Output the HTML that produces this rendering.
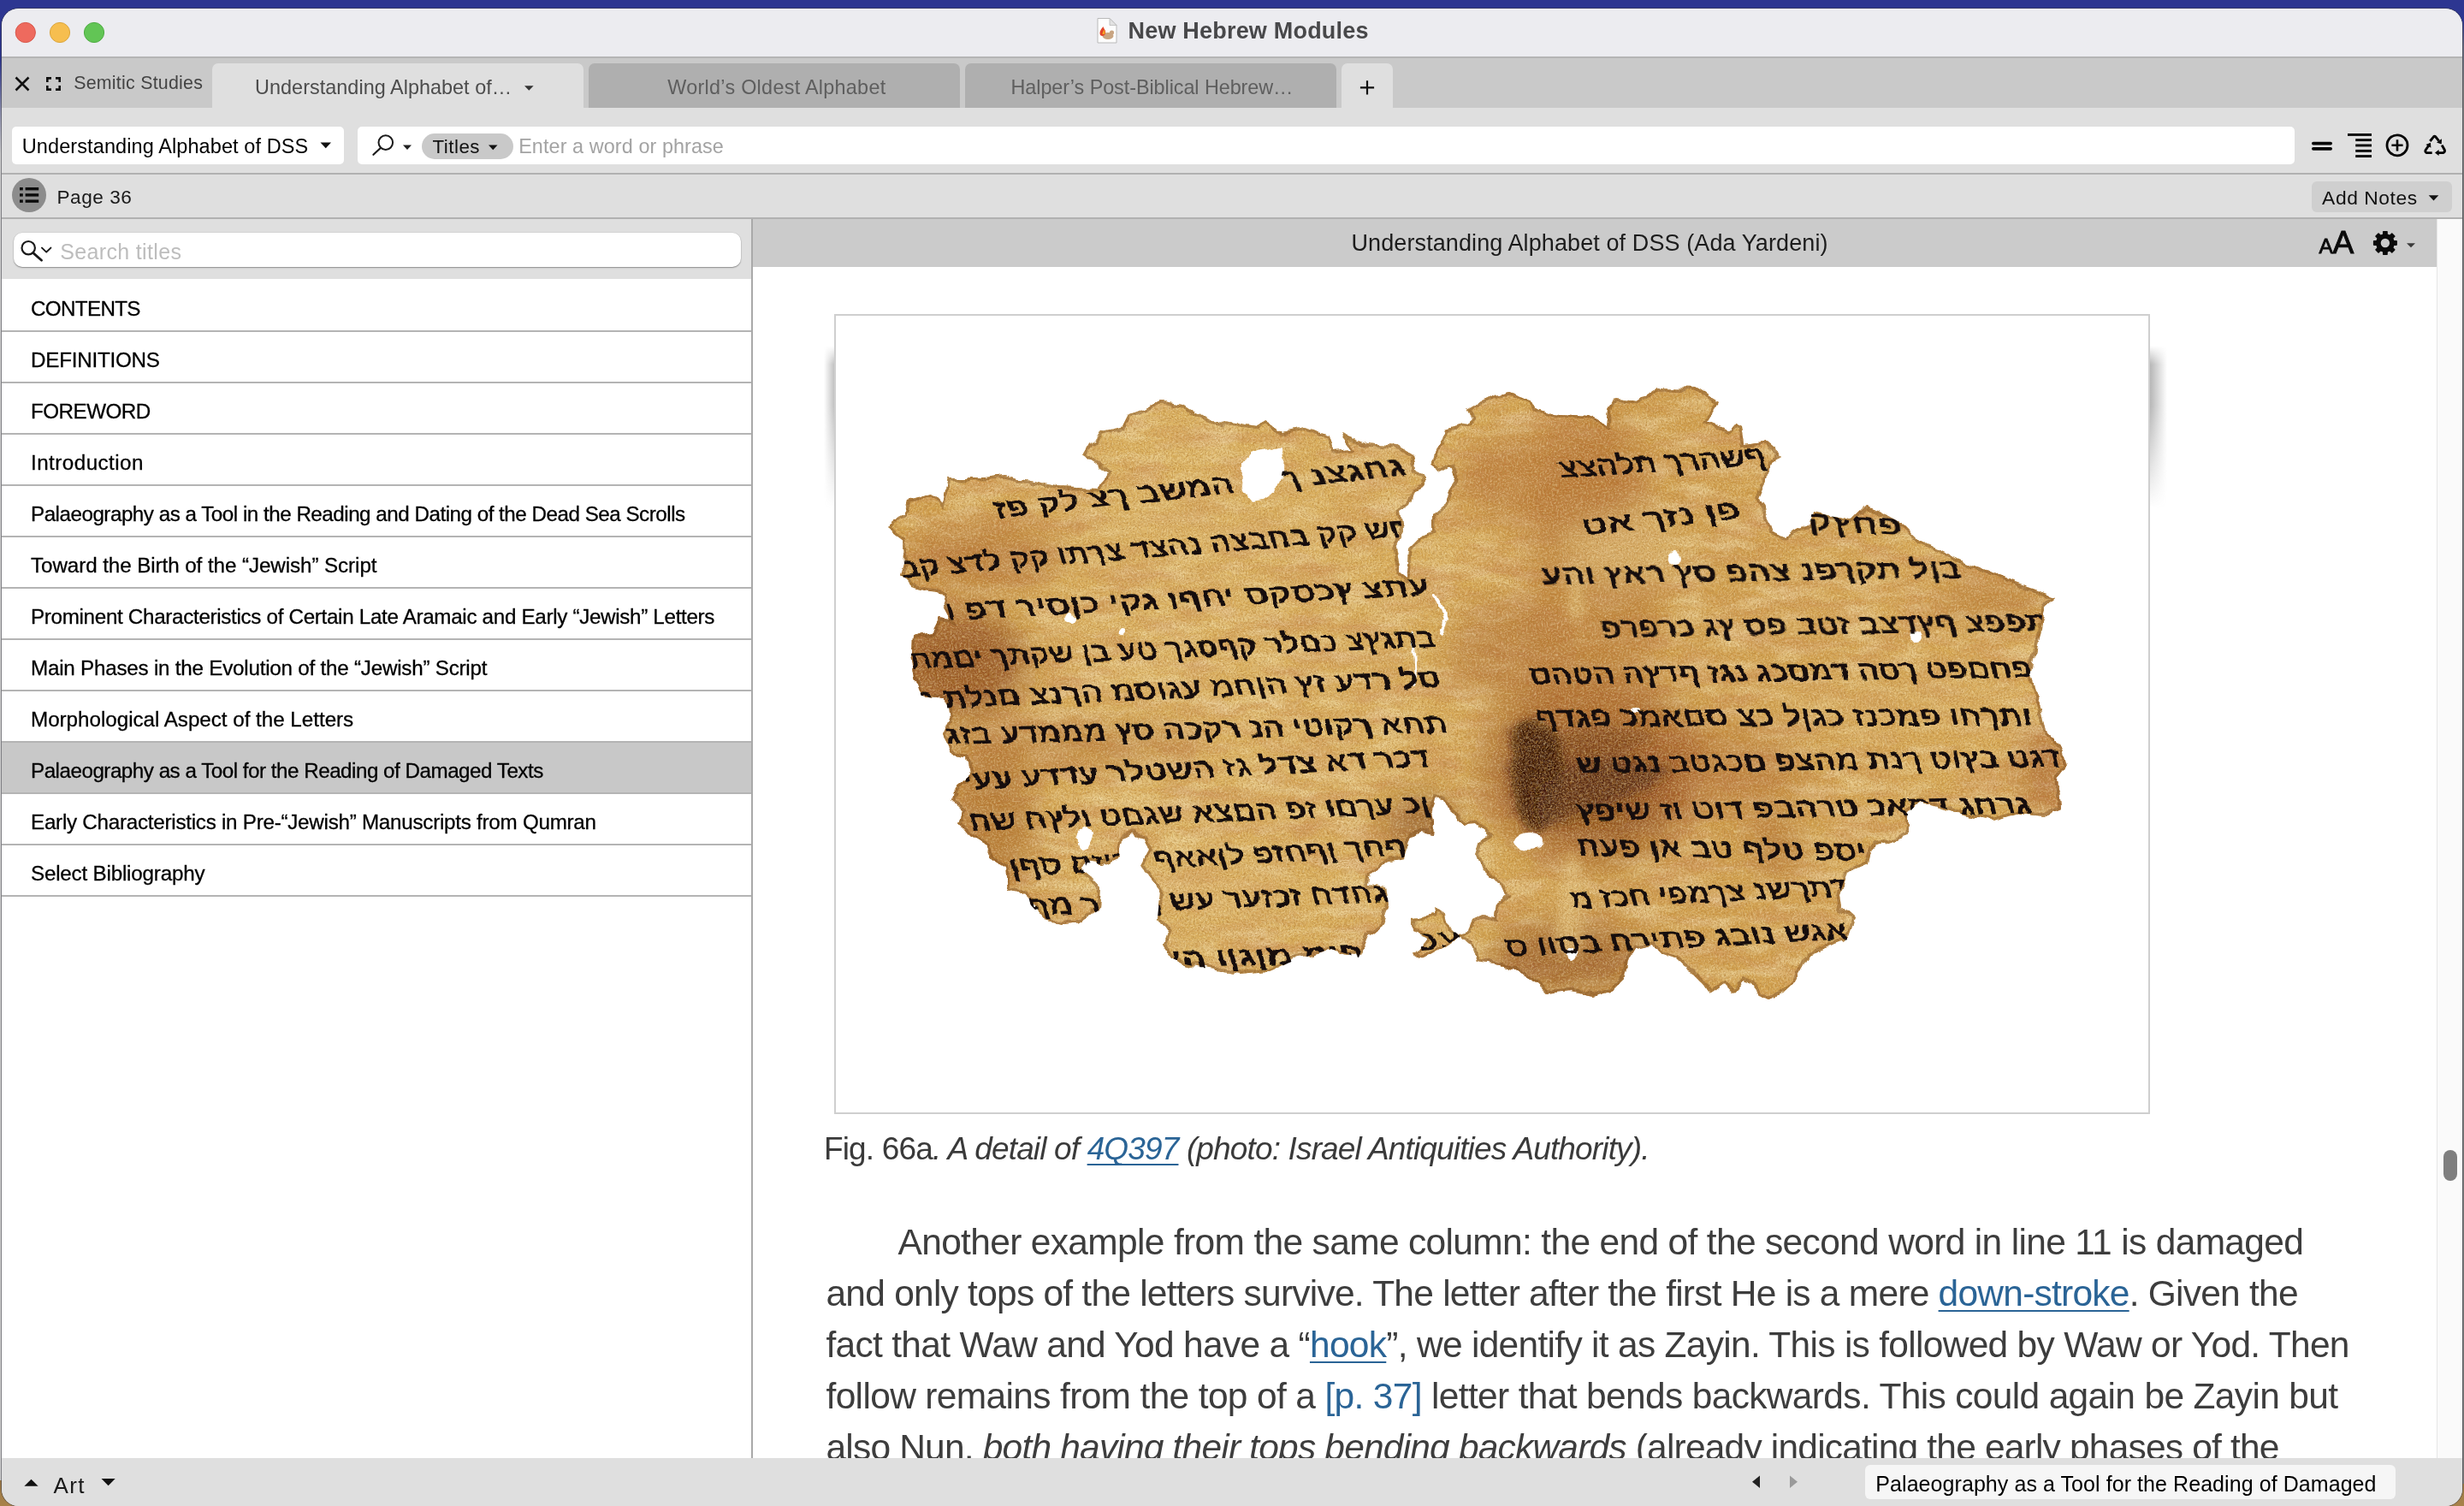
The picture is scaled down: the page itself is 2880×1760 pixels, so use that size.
<!DOCTYPE html>
<html lang="en"><head><meta charset="utf-8"><title>New Hebrew Modules</title>
<style>
html,body{margin:0;padding:0}
body{width:2880px;height:1760px;position:relative;overflow:hidden;font-family:"Liberation Sans",sans-serif;
 background:linear-gradient(180deg,#2d3691 0,#2d3691 700px,#3a3f6e 1100px,#6b5a3a 1600px,#a8824a 1760px)}
.a{position:absolute}
.t{position:absolute;white-space:pre;line-height:1}
.lk{color:#2a6496;text-decoration:underline;text-decoration-skip-ink:none;text-decoration-thickness:2px;text-underline-offset:5px}
.pg{color:#2a6496}
i{font-style:italic}
#win{left:2px;top:10px;width:2876px;height:1750px;border-radius:20px 20px 20px 20px;background:#dfdfdf;overflow:hidden;box-shadow:0 0 0 1px rgba(60,60,70,.55)}
.sep{position:absolute;height:2px;background:#b1b1b1}
.tab{position:absolute;top:64px;height:52px;border-radius:7px 7px 0 0}
.row{position:absolute;left:0;width:876px;height:58px;background:#fff;border-bottom:2px solid #b4b4b4}
</style></head><body>
<!-- desktop edge strips -->
<div class="a" style="left:0;top:70px;width:3px;height:1660px;background:linear-gradient(180deg,#2d3691 0,#8f92b0 60px,#cfcfcf 110px,#cfcfcf 100%)"></div>
<div class="a" style="left:2877px;top:24px;width:3px;height:1710px;background:linear-gradient(180deg,#2d3691 0,#666a80 30px,#7e7e7e 80px,#7e7e7e 100%)"></div>
<!-- window (coords inside #win are offset by -2,-10) -->
<div id="win" class="a">
 <!-- title bar -->
 <div class="a" style="left:0;top:0;width:2876px;height:56px;background:#ececf0"></div>
 <div class="a" style="left:0;top:56px;width:2876px;height:2px;background:#b5b5b5"></div>
 <!-- tab bar -->
 <div class="a" style="left:0;top:58px;width:2876px;height:58px;background:#c9c9c9"></div>
 <div class="tab" style="left:246px;width:434px;background:#dfdfdf"></div>
 <div class="tab" style="left:686px;width:434px;background:#afafaf"></div>
 <div class="tab" style="left:1126px;width:434px;background:#afafaf"></div>
 <div class="tab" style="left:1566px;width:60px;background:#dfdfdf"></div>
 <!-- toolbar -->
 <div class="a" style="left:12px;top:138px;width:388px;height:44px;background:#fff;border-radius:5px"></div>
 <div class="a" style="left:416px;top:138px;width:2264px;height:44px;background:#fff;border-radius:5px"></div>
 <div class="a" style="left:491px;top:146px;width:107px;height:30px;background:#c9c9c9;border-radius:15px"></div>
 <div class="sep" style="left:0;top:192px;width:2876px"></div>
 <!-- page row -->
 <div class="a" style="left:12px;top:198px;width:40px;height:40px;border-radius:20px;background:#8c8c8c"></div>
 <div class="a" style="left:2700px;top:202px;width:164px;height:36px;border-radius:6px;background:#cfcfcf"></div>
 <div class="sep" style="left:0;top:244px;width:2876px"></div>
 <!-- sidebar -->
 <div class="a" style="left:0;top:246px;width:876px;height:70px;background:#dfdfdf"></div>
 <div class="a" style="left:14px;top:262px;width:850px;height:40px;background:#fff;border-radius:10px;box-shadow:0 1px 1.5px rgba(0,0,0,.35),0 0 0 .5px rgba(0,0,0,.08)"></div>
 <div class="a" style="left:0;top:316px;width:876px;height:1378px;background:#fff"></div>
 <div class="row" style="top:318px"></div>
 <div class="row" style="top:378px"></div>
 <div class="row" style="top:438px"></div>
 <div class="row" style="top:498px"></div>
 <div class="row" style="top:558px"></div>
 <div class="row" style="top:618px"></div>
 <div class="row" style="top:678px"></div>
 <div class="row" style="top:738px"></div>
 <div class="row" style="top:798px"></div>
 <div class="row" style="top:858px;background:#c8c8c8"></div>
 <div class="row" style="top:918px"></div>
 <div class="row" style="top:978px"></div>
 <div class="a" style="left:876px;top:246px;width:2px;height:1448px;background:#a9a9a9"></div>
 <!-- content -->
 <div class="a" style="left:878px;top:246px;width:1968px;height:56px;background:#cbcbcb"></div>
 <div class="a" style="left:878px;top:302px;width:1968px;height:1392px;background:#fff"></div>
 <!-- scrollbar -->
 <div class="a" style="left:2846px;top:246px;width:30px;height:1448px;background:#fafafa;border-left:1px solid #e6e6e6;box-sizing:border-box"></div>
 <div class="a" style="left:2854px;top:1334px;width:16px;height:36px;border-radius:8px;background:#7f7f7f"></div>
</div>

<!-- icons -->
<svg class="a" style="left:0;top:0;z-index:6" width="2880" height="340" viewBox="0 0 2880 340">
 <!-- traffic lights -->
 <circle cx="29.8" cy="38" r="11.6" fill="#ee6a5e" stroke="#d8574b" stroke-width="1"/>
 <circle cx="70" cy="38" r="11.6" fill="#f6be4f" stroke="#dba53b" stroke-width="1"/>
 <circle cx="110" cy="38" r="11.6" fill="#62c555" stroke="#4eac42" stroke-width="1"/>
 <!-- doc icon -->
 <g>
  <path d="M1283 21.5h14l8 8v20.5h-22z" fill="#fdfdfd" stroke="#b9b9b9" stroke-width="1"/>
  <path d="M1297 21.5v8h8z" fill="#e2e2e2" stroke="#b9b9b9" stroke-width=".8"/>
  <ellipse cx="1295" cy="42" rx="6.5" ry="4" fill="#c9a582"/>
  <circle cx="1299.5" cy="38" r="2.6" fill="#c9a582"/>
  <path d="M1286 41c-1.500-4 1-7 3.500-10 .5 3 3.500 4 2.500 8-.8 3-4 4-6 2z" fill="#e2452a"/>
  <path d="M1288.500 40c0-2.500 1.500-3.500 2-5.500 1 2 1.500 3.500.5 5.500z" fill="#f5a623"/>
 </g>
 <!-- close X -->
 <path d="M18.500 90.500l15 15M33.500 90.500l-15 15" stroke="#111" stroke-width="2.600" fill="none"/>
 <!-- fullscreen brackets -->
 <path d="M55.300 96v-4.600h4.700M65 91.400h4.700v4.600M69.700 100v4.600h-4.700M60 104.600h-4.700v-4.600" stroke="#111" stroke-width="2.600" fill="none"/>
 <!-- tab triangle -->
 <path d="M613 100.200h10.600l-5.300 5.600z" fill="#333"/>
 <!-- + -->
 <path d="M1598 94.200v16.200M1589.900 102.300h16.200" stroke="#111" stroke-width="2.200" fill="none"/>
 <!-- dropdown triangle -->
 <path d="M374.500 166.500h12.500l-6.250 6.800z" fill="#111"/>
 <!-- magnifier -->
 <circle cx="450.800" cy="166.600" r="8.300" fill="none" stroke="#1a1a1a" stroke-width="2"/>
 <path d="M445 172.800l-8.600 8" stroke="#1a1a1a" stroke-width="2.200" stroke-linecap="round"/>
 <path d="M471 169.500h10l-5 5.500z" fill="#222"/>
 <!-- Titles triangle -->
 <path d="M571 169.500h10.500l-5.250 5.800z" fill="#111"/>
 <!-- list icon in circle -->
 <g fill="#0a0a0a">
  <rect x="23" y="219" width="3.800" height="3.400"/><rect x="29.600" y="219" width="15.600" height="3.400"/>
  <rect x="23" y="226.200" width="3.800" height="3.400"/><rect x="29.600" y="226.200" width="15.600" height="3.400"/>
  <rect x="23" y="233.400" width="3.800" height="3.400"/><rect x="29.600" y="233.400" width="15.600" height="3.400"/>
 </g>
 <!-- sidebar search magnifier -->
 <circle cx="33.200" cy="289.700" r="7.700" fill="none" stroke="#1a1a1a" stroke-width="2.200"/>
 <path d="M38.800 295.600l9.800 8.600" stroke="#1a1a1a" stroke-width="2.800" stroke-linecap="round"/>
 <path d="M49 289.600l5.200 5 5.200-5" stroke="#1a1a1a" stroke-width="2" fill="none" stroke-linecap="round" stroke-linejoin="round"/>
 <!-- = icon -->
 <path d="M2703.900 167.600h20.200M2703.900 173.800h20.200" stroke="#050505" stroke-width="3.800" stroke-linecap="round"/>
 <!-- align right icon -->
 <g fill="#050505">
  <rect x="2744" y="156" width="28" height="2.900"/>
  <rect x="2753.200" y="162.200" width="18.800" height="2.900"/>
  <rect x="2753.200" y="168.500" width="18.800" height="2.900"/>
  <rect x="2753.200" y="174.900" width="18.800" height="2.900"/>
  <rect x="2753.200" y="181.100" width="18.800" height="2.900"/>
 </g>
 <!-- circle plus -->
 <circle cx="2802" cy="169.800" r="12" fill="none" stroke="#050505" stroke-width="2.800"/>
 <path d="M2802 163.200v13.200M2795.400 169.800h13.200" stroke="#050505" stroke-width="2.600"/>
 <!-- recycle -->
 <g fill="none" stroke="#050505" stroke-width="2.900" stroke-linejoin="round" stroke-linecap="butt">
  <path d="M2840.300 165 L2844.500 159.800 Q2845.600 158.500 2846.700 159.800 L2850.600 164.600"/>
  <path d="M2838.600 170.300 L2835.200 175.300 Q2834 177.300 2836.200 178.600 L2842.700 178.600"/>
  <path d="M2854.200 169.600 L2857.200 175 Q2858.300 177.200 2855.800 178.600 L2849.800 178.600"/>
 </g>
 <path d="M2848 166.600l6 -4.400l-.3 6.200z" fill="#050505"/>
 <path d="M2835.400 169l5.600 -2.200l.4 6z" fill="#050505"/>
 <path d="M2846 178.600l4.600 -3.500v7z" fill="#050505"/>
 <!-- Add notes triangle -->
 <path d="M2838.700 228.300h11.600l-5.800 6.300z" fill="#111"/>
 <!-- gear -->
 <g transform="translate(2787.900 284)">
  <g fill="#0a0a0a">
   <rect x="-2.900" y="-14" width="5.800" height="28" rx=".8"/>
   <rect x="-2.900" y="-14" width="5.800" height="28" rx=".8" transform="rotate(45)"/>
   <rect x="-2.900" y="-14" width="5.800" height="28" rx=".8" transform="rotate(90)"/>
   <rect x="-2.900" y="-14" width="5.800" height="28" rx=".8" transform="rotate(135)"/>
   <circle r="10.800"/>
  </g>
  <circle r="5.200" fill="#cbcbcb"/>
 </g>
 <path d="M2813 284.200h10l-5 5z" fill="#3a3a3a"/>
</svg>
<!-- image frame -->
<div class="a" style="left:975px;top:367px;width:1538px;height:935px;box-sizing:border-box;border:2px solid #cfcfcf;background:#fff;z-index:2"></div>
<div class="a" style="left:963px;top:404px;width:12px;height:200px;z-index:2;background:linear-gradient(90deg,rgba(120,120,120,0),rgba(120,120,120,.45));-webkit-mask-image:linear-gradient(180deg,transparent 0,#000 22px,#000 70px,transparent 190px);mask-image:linear-gradient(180deg,transparent 0,#000 22px,#000 70px,transparent 190px)"></div>
<div class="a" style="left:2513px;top:404px;width:20px;height:200px;z-index:2;background:linear-gradient(90deg,rgba(110,110,110,.5),rgba(120,120,120,0));-webkit-mask-image:linear-gradient(180deg,transparent 0,#000 22px,#000 70px,transparent 190px);mask-image:linear-gradient(180deg,transparent 0,#000 22px,#000 70px,transparent 190px)"></div>
<svg class="a" style="left:977px;top:369px;z-index:3" width="1534" height="930" viewBox="977 369 1534 930">
<defs>
 <filter id="rough" x="-2%" y="-2%" width="104%" height="104%">
  <feTurbulence type="fractalNoise" baseFrequency="0.045" numOctaves="3" seed="4" result="n"/>
  <feDisplacementMap in="SourceGraphic" in2="n" scale="11" xChannelSelector="R" yChannelSelector="G"/>
 </filter>
 <filter id="ink" x="-2%" y="-10%" width="104%" height="120%">
  <feTurbulence type="fractalNoise" baseFrequency="0.09" numOctaves="2" seed="9" result="n"/>
  <feDisplacementMap in="SourceGraphic" in2="n" scale="5" xChannelSelector="R" yChannelSelector="G"/>
 </filter>
 <filter id="tex" x="0" y="0" width="100%" height="100%">
  <feTurbulence type="fractalNoise" baseFrequency="0.014 0.05" numOctaves="4" seed="3" result="n"/>
  <feColorMatrix in="n" type="matrix" values="0 0 0 0 0.62  0 0 0 0 0.30  0 0 0 0 0.10  2.6 0 0 0 -1.05"/>
 </filter>
 <filter id="lite" x="0" y="0" width="100%" height="100%">
  <feTurbulence type="fractalNoise" baseFrequency="0.02 0.07" numOctaves="4" seed="21" result="n"/>
  <feColorMatrix in="n" type="matrix" values="0 0 0 0 0.95  0 0 0 0 0.83  0 0 0 0 0.52  0 2.8 0 0 -1.15"/>
 </filter>
 <filter id="grain" x="0" y="0" width="100%" height="100%">
  <feTurbulence type="fractalNoise" baseFrequency="0.55" numOctaves="2" seed="11" result="n"/>
  <feColorMatrix in="n" type="matrix" values="0 0 0 0 0.45  0 0 0 0 0.22  0 0 0 0 0.04  0 2.2 0 0 -0.85"/>
 </filter>
 <filter id="grainl" x="0" y="0" width="100%" height="100%">
  <feTurbulence type="fractalNoise" baseFrequency="0.5" numOctaves="2" seed="5" result="n"/>
  <feColorMatrix in="n" type="matrix" values="0 0 0 0 0.98  0 0 0 0 0.88  0 0 0 0 0.58  0 0 2.2 0 -0.9"/>
 </filter>
 <filter id="blur18"><feGaussianBlur stdDeviation="18"/></filter>
 <filter id="blur8"><feGaussianBlur stdDeviation="7"/></filter>
 <clipPath id="frag"><path d="M1036 617 L1048 607 L1056 603 L1061 585 L1088 578 L1100 590 L1106 558 L1151 558 L1173 555 L1234 569 L1282 571 L1297 553 L1266 532 L1274 518 L1287 505 L1311 500 L1319 484 L1337 477 L1356 468 L1383 472 L1414 492 L1452 497 L1470 500 L1477 492 L1498 505 L1527 500 L1554 510 L1559 526 L1580 524 L1567 506 L1599 518 L1633 521 L1652 532 L1655 550 L1666 556 L1662 569 L1652 574 L1647 590 L1636 598 L1639 622 L1631 640 L1636 670 L1644 676 L1646 660 L1647 640 L1660 627 L1676 622 L1676 601 L1689 590 L1702 558 L1697 545 L1681 553 L1674 542 L1684 521 L1689 502 L1716 494 L1721 489 L1716 478 L1732 468 L1763 458 L1790 468 L1795 477 L1822 484 L1859 486 L1878 497 L1880 478 L1888 465 L1915 469 L1937 453 L1983 454 L2009 470 L1995 493 L2020 503 L2026 496 L2035 500 L2038 518 L2061 515 L2082 532 L2069 540 L2064 563 L2056 581 L2066 604 L2072 621 L2086 628 L2101 618 L2115 612 L2118 598 L2144 604 L2164 609 L2181 592 L2210 604 L2224 612 L2244 632 L2282 650 L2316 664 L2356 681 L2402 697 L2388 710 L2385 736 L2379 764 L2374 790 L2385 824 L2393 856 L2411 873 L2416 896 L2405 910 L2408 945 L2388 954 L2359 951 L2330 959 L2302 954 L2273 945 L2244 936 L2230 951 L2230 976 L2213 982 L2187 991 L2184 1011 L2158 1022 L2150 1045 L2152 1060 L2167 1074 L2158 1100 L2141 1106 L2115 1116 L2107 1130 L2097 1148 L2084 1160 L2069 1166 L2057 1163 L2048 1151 L2037 1147 L2026 1161 L2016 1150 L2000 1161 L1993 1150 L1980 1137 L1966 1130 L1956 1121 L1940 1116 L1932 1104 L1912 1108 L1904 1121 L1899 1143 L1886 1156 L1862 1163 L1837 1158 L1808 1161 L1794 1147 L1769 1132 L1740 1127 L1726 1125 L1721 1109 L1705 1095 L1689 1106 L1660 1122 L1652 1117 L1670 1095 L1652 1088 L1652 1074 L1676 1069 L1678 1061 L1690 1069 L1692 1080 L1705 1093 L1716 1090 L1721 1074 L1732 1069 L1748 1072 L1750 1053 L1761 1045 L1748 1029 L1732 1016 L1726 1000 L1732 981 L1740 976 L1726 964 L1713 965 L1702 955 L1692 947 L1686 935 L1676 933 L1673 944 L1677 960 L1676 976 L1660 973 L1647 981 L1641 1002 L1623 1005 L1601 1021 L1599 1034 L1620 1037 L1623 1056 L1615 1080 L1599 1093 L1588 1119 L1556 1109 L1514 1122 L1484 1135 L1450 1138 L1414 1133 L1385 1127 L1369 1119 L1359 1103 L1364 1088 L1353 1072 L1356 1042 L1343 1026 L1335 1010 L1343 995 L1337 981 L1324 976 L1312 981 L1308 1000 L1287 1010 L1271 1008 L1266 1018 L1276 1026 L1286 1037 L1284 1064 L1266 1076 L1239 1078 L1220 1074 L1205 1058 L1199 1045 L1178 1040 L1175 1013 L1157 1002 L1151 987 L1133 976 L1120 960 L1125 947 L1112 936 L1114 923 L1133 907 L1130 883 L1112 880 L1101 859 L1109 843 L1106 817 L1077 814 L1069 790 L1065 765 L1066 744 L1090 739 L1098 723 L1112 725 L1105 712 L1101 694 L1064 686 L1053 672 L1057 659 L1056 632Z M1452 542 L1462 529 L1478 524 L1497 520 L1501 540 L1497 560 L1490 575 L1478 583 L1462 585 L1451 570Z" clip-rule="evenodd"/></clipPath>
 <linearGradient id="base" x1="0" y1="0" x2="1" y2="0">
  <stop offset="0" stop-color="#d2a04c"/><stop offset=".25" stop-color="#ddb462"/><stop offset=".5" stop-color="#d8ab58"/><stop offset=".62" stop-color="#cf9c4a"/><stop offset="1" stop-color="#dcb05c"/>
 </linearGradient>
</defs>
<g filter="url(#rough)">
 <g clip-path="url(#frag)">
  <rect x="1000" y="430" width="1460" height="760" fill="url(#base)"/>
  <rect x="1000" y="430" width="1460" height="760" filter="url(#tex)" opacity=".8"/>
  <rect x="1000" y="430" width="1460" height="760" filter="url(#lite)" opacity=".45"/>
  <!-- blotches -->
  <g filter="url(#blur18)">
   <ellipse cx="1810" cy="560" rx="110" ry="60" fill="#b06a2c" opacity=".6"/>
   <ellipse cx="1860" cy="900" rx="130" ry="110" fill="#96501e" opacity=".7"/>
   <ellipse cx="1760" cy="760" rx="70" ry="60" fill="#a8642a" opacity=".5"/>
   <ellipse cx="1830" cy="1120" rx="90" ry="40" fill="#8a4a1c" opacity=".7"/>
   <ellipse cx="1125" cy="775" rx="75" ry="60" fill="#8a4418" opacity=".85"/>
   <ellipse cx="1160" cy="960" rx="50" ry="90" fill="#a05a22" opacity=".6"/>
   <ellipse cx="1860" cy="700" rx="75" ry="230" fill="#b0682c" opacity=".5"/>
   <ellipse cx="1870" cy="915" rx="85" ry="55" fill="#6e3210" opacity=".7"/>
   <ellipse cx="1990" cy="900" rx="120" ry="50" fill="#a85c26" opacity=".45"/>
   <ellipse cx="1150" cy="650" rx="90" ry="40" fill="#aa642a" opacity=".6"/>
   <ellipse cx="1240" cy="870" rx="160" ry="25" fill="#a8622a" opacity=".5"/>
   <ellipse cx="2330" cy="700" rx="70" ry="22" fill="#a8602a" opacity=".6"/>
   <ellipse cx="2390" cy="900" rx="30" ry="50" fill="#9a4a22" opacity=".6"/>
   <ellipse cx="1660" cy="960" rx="40" ry="30" fill="#7a3a14" opacity=".7"/>
   <ellipse cx="2075" cy="985" rx="28" ry="40" fill="#a8642a" opacity=".6"/>
   <ellipse cx="1900" cy="640" rx="70" ry="40" fill="#e2c07a" opacity=".7"/>
   <ellipse cx="1400" cy="620" rx="120" ry="25" fill="#dcb266" opacity=".6"/>
   <ellipse cx="1420" cy="1040" rx="100" ry="40" fill="#dcb266" opacity=".55"/>
   <ellipse cx="2200" cy="820" rx="150" ry="30" fill="#d9ae60" opacity=".5"/>
  </g>
  <g filter="url(#blur8)">
   <path d="M1772 846 q34 -14 52 18 q12 54 -8 92 q-28 34 -42 -8 q-16 -56 -2 -102z" fill="#2e1206" opacity=".95"/>
   <path d="M1800 920 q50 -40 110 -30 q30 10 50 0 q-30 40 -90 50 q-40 20 -70 30z" fill="#4a200c" opacity=".8"/>
   <path d="M1820 850 q60 -10 120 10 q-40 30 -110 30z" fill="#6a3414" opacity=".55"/>
   <path d="M1840 990 q14 40 6 120 q-14 20 -26 -4 q-6 -70 20 -116z" fill="#e3c27e" opacity=".8"/>
   <path d="M1838 655 q16 10 14 60 q-8 30 -20 0 q-4 -40 6 -60z" fill="#e3c27e" opacity=".7"/>
  </g>
  <rect x="1000" y="430" width="1460" height="760" filter="url(#grain)" opacity=".75"/>
  <rect x="1000" y="430" width="1460" height="760" filter="url(#grainl)" opacity=".45"/>
  <!-- edge darkening -->
  <path d="M1036 617 L1048 607 L1056 603 L1061 585 L1088 578 L1100 590 L1106 558 L1151 558 L1173 555 L1234 569 L1282 571 L1297 553 L1266 532 L1274 518 L1287 505 L1311 500 L1319 484 L1337 477 L1356 468 L1383 472 L1414 492 L1452 497 L1470 500 L1477 492 L1498 505 L1527 500 L1554 510 L1559 526 L1580 524 L1567 506 L1599 518 L1633 521 L1652 532 L1655 550 L1666 556 L1662 569 L1652 574 L1647 590 L1636 598 L1639 622 L1631 640 L1636 670 L1644 676 L1646 660 L1647 640 L1660 627 L1676 622 L1676 601 L1689 590 L1702 558 L1697 545 L1681 553 L1674 542 L1684 521 L1689 502 L1716 494 L1721 489 L1716 478 L1732 468 L1763 458 L1790 468 L1795 477 L1822 484 L1859 486 L1878 497 L1880 478 L1888 465 L1915 469 L1937 453 L1983 454 L2009 470 L1995 493 L2020 503 L2026 496 L2035 500 L2038 518 L2061 515 L2082 532 L2069 540 L2064 563 L2056 581 L2066 604 L2072 621 L2086 628 L2101 618 L2115 612 L2118 598 L2144 604 L2164 609 L2181 592 L2210 604 L2224 612 L2244 632 L2282 650 L2316 664 L2356 681 L2402 697 L2388 710 L2385 736 L2379 764 L2374 790 L2385 824 L2393 856 L2411 873 L2416 896 L2405 910 L2408 945 L2388 954 L2359 951 L2330 959 L2302 954 L2273 945 L2244 936 L2230 951 L2230 976 L2213 982 L2187 991 L2184 1011 L2158 1022 L2150 1045 L2152 1060 L2167 1074 L2158 1100 L2141 1106 L2115 1116 L2107 1130 L2097 1148 L2084 1160 L2069 1166 L2057 1163 L2048 1151 L2037 1147 L2026 1161 L2016 1150 L2000 1161 L1993 1150 L1980 1137 L1966 1130 L1956 1121 L1940 1116 L1932 1104 L1912 1108 L1904 1121 L1899 1143 L1886 1156 L1862 1163 L1837 1158 L1808 1161 L1794 1147 L1769 1132 L1740 1127 L1726 1125 L1721 1109 L1705 1095 L1689 1106 L1660 1122 L1652 1117 L1670 1095 L1652 1088 L1652 1074 L1676 1069 L1678 1061 L1690 1069 L1692 1080 L1705 1093 L1716 1090 L1721 1074 L1732 1069 L1748 1072 L1750 1053 L1761 1045 L1748 1029 L1732 1016 L1726 1000 L1732 981 L1740 976 L1726 964 L1713 965 L1702 955 L1692 947 L1686 935 L1676 933 L1673 944 L1677 960 L1676 976 L1660 973 L1647 981 L1641 1002 L1623 1005 L1601 1021 L1599 1034 L1620 1037 L1623 1056 L1615 1080 L1599 1093 L1588 1119 L1556 1109 L1514 1122 L1484 1135 L1450 1138 L1414 1133 L1385 1127 L1369 1119 L1359 1103 L1364 1088 L1353 1072 L1356 1042 L1343 1026 L1335 1010 L1343 995 L1337 981 L1324 976 L1312 981 L1308 1000 L1287 1010 L1271 1008 L1266 1018 L1276 1026 L1286 1037 L1284 1064 L1266 1076 L1239 1078 L1220 1074 L1205 1058 L1199 1045 L1178 1040 L1175 1013 L1157 1002 L1151 987 L1133 976 L1120 960 L1125 947 L1112 936 L1114 923 L1133 907 L1130 883 L1112 880 L1101 859 L1109 843 L1106 817 L1077 814 L1069 790 L1065 765 L1066 744 L1090 739 L1098 723 L1112 725 L1105 712 L1101 694 L1064 686 L1053 672 L1057 659 L1056 632Z" fill="none" stroke="#7a4a1a" stroke-width="7" opacity=".45"/>
 </g>
 <!-- holes / cracks -->
 <g fill="#fff" stroke="none">
  <ellipse cx="1268" cy="979" rx="8" ry="12.500" transform="rotate(28 1268 979)"/>
  <ellipse cx="1787" cy="983" rx="17" ry="10"/>
  <circle cx="1838" cy="1116" r="7"/><circle cx="1957" cy="652" r="8"/><circle cx="2240" cy="744" r="7"/>
  <circle cx="1250" cy="723" r="5"/><circle cx="1313" cy="738" r="4"/><circle cx="1911" cy="831" r="3"/>
 </g>
 <g fill="none" stroke="#fff" stroke-width="4" stroke-linecap="round">
  <path d="M1678 696 l8 14 l4 14 l-6 14"/><path d="M1650 740 l3 30 l2 30" stroke-width="3"/>
 </g>
</g>
<g clip-path="url(#frag)"><g filter="url(#ink)" font-family="Liberation Sans, sans-serif" font-weight="bold" font-size="32" fill="#17100a" text-anchor="start" direction="ltr" unicode-bidi="bidi-override">
<text x="0" y="0" textLength="282" lengthAdjust="spacingAndGlyphs" transform="translate(1165 606) rotate(-6.19) skewX(12)">המשב ךצ לק פז</text>
<text x="0" y="0" textLength="146" lengthAdjust="spacingAndGlyphs" transform="translate(1500 571) rotate(-6.52) skewX(12)">גחגצנ ך</text>
<text x="0" y="0" textLength="599" lengthAdjust="spacingAndGlyphs" transform="translate(1055 675) rotate(-4.63) skewX(12)">חש קק בחבצה נהצד צךתו קק לדצ קב</text>
<text x="0" y="0" textLength="567" lengthAdjust="spacingAndGlyphs" transform="translate(1107 725) rotate(-3.00) skewX(12)">עתצ ץכסקס יחףו גקי כןסיר דפ ו</text>
<text x="0" y="0" textLength="615" lengthAdjust="spacingAndGlyphs" transform="translate(1066 782) rotate(-2.44) skewX(12)">בתגץצ כםלר קףסגך טע בן שקתך יםמת</text>
<text x="0" y="0" textLength="618" lengthAdjust="spacingAndGlyphs" transform="translate(1069 829) rotate(-2.43) skewX(12)">סל רדע זץ הןחמ עגוסמ הךנצ םנלת ח</text>
<text x="0" y="0" textLength="587" lengthAdjust="spacingAndGlyphs" transform="translate(1107 870) rotate(-1.35) skewX(12)">תחא ךקוטי הנ רקכה סץ מממדע בזג</text>
<text x="0" y="0" textLength="546" lengthAdjust="spacingAndGlyphs" transform="translate(1128 923) rotate(-2.90) skewX(12)">דכר דא צדל גז השטלר עדדע עעי</text>
<text x="0" y="0" textLength="539" lengthAdjust="spacingAndGlyphs" transform="translate(1135 971) rotate(-2.20) skewX(12)">ןכ עךםו זפ הםצא שגםט ולץח שח</text>
<text x="0" y="0" textLength="463" lengthAdjust="spacingAndGlyphs" transform="translate(1183 1024) rotate(-3.08) skewX(12)">ףחך ןףחזפ לןאאף עטזם סףן</text>
<text x="0" y="0" textLength="421" lengthAdjust="spacingAndGlyphs" transform="translate(1204 1070) rotate(-2.16) skewX(12)">גחדח זכזער עש ףשגך מף</text>
<text x="0" y="0" textLength="262" lengthAdjust="spacingAndGlyphs" transform="translate(1355 1132) rotate(-1.96) skewX(12)">גףןמ מןגןו הא</text>
<text x="0" y="0" textLength="242" lengthAdjust="spacingAndGlyphs" transform="translate(1825 559) rotate(-3.76) skewX(12)">ףשהרך תלהצצ</text>
<text x="0" y="0" textLength="187" lengthAdjust="spacingAndGlyphs" transform="translate(1852 626) rotate(-6.34) skewX(12)">פן נזך אט</text>
<text x="0" y="0" textLength="111" lengthAdjust="spacingAndGlyphs" transform="translate(2114 619) rotate(3.58) skewX(12)">פחץק</text>
<text x="0" y="0" textLength="490" lengthAdjust="spacingAndGlyphs" transform="translate(1804 683) rotate(-0.97) skewX(12)">בןל תקךפנ צהפ סץ ראץ והע</text>
<text x="0" y="0" textLength="524" lengthAdjust="spacingAndGlyphs" transform="translate(1873 745) rotate(-0.90) skewX(12)">תפפצ ףץדצב זטב פס ץג כרפרפ</text>
<text x="0" y="0" textLength="587" lengthAdjust="spacingAndGlyphs" transform="translate(1790 800) rotate(-0.81) skewX(12)">פחםפט ךסה דמסכג נגז ףדץה הטהס</text>
<text x="0" y="0" textLength="580" lengthAdjust="spacingAndGlyphs" transform="translate(1797 849) rotate(-0.14) skewX(12)">ותךחו פמכנז כגןל כצ סםאמכ פגדף</text>
<text x="0" y="0" textLength="566" lengthAdjust="spacingAndGlyphs" transform="translate(1845 904) rotate(-0.84) skewX(12)">דגט בץוט ךנת מהצפ םכגטב נגט ש</text>
<text x="0" y="0" textLength="531" lengthAdjust="spacingAndGlyphs" transform="translate(1845 959) rotate(-0.89) skewX(12)">גרחג דסאכ טרהבפ דוט וז שיפץ</text>
<text x="0" y="0" textLength="338" lengthAdjust="spacingAndGlyphs" transform="translate(1845 1000) rotate(0.94) skewX(12)">יספ טלף טב אן פעח</text>
<text x="0" y="0" textLength="325" lengthAdjust="spacingAndGlyphs" transform="translate(1838 1062) rotate(-2.68) skewX(12)">דתךשנ צךמפי חכז מ</text>
<text x="0" y="0" textLength="401" lengthAdjust="spacingAndGlyphs" transform="translate(1762 1118) rotate(-2.96) skewX(12)">אגש נובג פתירח בסוו ס</text>
<text x="0" y="0" textLength="52" lengthAdjust="spacingAndGlyphs" transform="translate(1659 1111) rotate(-3.05) skewX(12)">צכ</text>
</g></g>
</svg>
<!-- bottom bar -->
<div class="a" style="left:2px;top:1704px;width:2876px;height:56px;background:#dfdfdf;border-radius:0 0 20px 20px;z-index:4"></div>
<div class="a" style="left:2180px;top:1712px;width:620px;height:40px;background:#f6f6f6;border-radius:6px;z-index:4"></div>
<svg class="a" style="left:0;top:1700px;z-index:6" width="2880" height="60" viewBox="0 1700 2880 60">
 <path d="M28.400 1736.800h16.200l-8.100-8z" fill="#111"/>
 <path d="M118.500 1728h16.200l-8.100 8.300z" fill="#111"/>
 <path d="M2057 1724.600v14.400l-9-7.200z" fill="#222"/>
 <path d="M2092 1724.600v14.400l9-7.200z" fill="#9a9a9a"/>
</svg>

<!-- text -->
<div class="a" style="left:0;top:0;width:2880px;height:1760px;z-index:7;will-change:transform">
<div class="t" style="left:1318.5px;top:23.1px;font-size:27px;color:#48484a;font-weight:bold;letter-spacing:0.202px;">New Hebrew Modules</div>
<div class="t" style="left:86.2px;top:86.9px;font-size:21.4px;color:#444;font-weight:normal;letter-spacing:0.234px;">Semitic Studies</div>
<div class="t" style="left:298.1px;top:91.0px;font-size:23.4px;color:#4c4c4c;font-weight:normal;letter-spacing:0.040px;">Understanding Alphabet of…</div>
<div class="t" style="left:780.3px;top:91.0px;font-size:23.4px;color:#5e5e5e;font-weight:normal;letter-spacing:0.278px;">World’s Oldest Alphabet</div>
<div class="t" style="left:1181.5px;top:91.0px;font-size:23.4px;color:#5e5e5e;font-weight:normal;letter-spacing:-0.067px;">Halper’s Post-Biblical Hebrew…</div>
<div class="t" style="left:25.8px;top:159.6px;font-size:23.5px;color:#000;font-weight:normal;letter-spacing:0.091px;">Understanding Alphabet of DSS</div>
<div class="t" style="left:505.5px;top:160.5px;font-size:22.4px;color:#111;font-weight:normal;letter-spacing:0.466px;">Titles</div>
<div class="t" style="left:606.2px;top:159.7px;font-size:23.4px;color:#a3a3a3;font-weight:normal;letter-spacing:0.084px;">Enter a word or phrase</div>
<div class="t" style="left:66.5px;top:219.9px;font-size:22.6px;color:#1a1a1a;font-weight:normal;letter-spacing:0.535px;">Page 36</div>
<div class="t" style="left:1579.5px;top:270.6px;font-size:27px;color:#1c1c1c;font-weight:normal;letter-spacing:0.099px;">Understanding Alphabet of DSS (Ada Yardeni)</div>
<div class="t" style="left:2714.1px;top:219.5px;font-size:22.8px;color:#111;font-weight:normal;letter-spacing:0.581px;">Add Notes</div>
<div class="t" style="left:70.2px;top:282.3px;font-size:25px;color:#bdbdbd;font-weight:normal;letter-spacing:0.353px;">Search titles</div>
<div class="t" style="left:2192.3px;top:1722.3px;font-size:25px;color:#000;font-weight:normal;letter-spacing:0.069px;">Palaeography as a Tool for the Reading of Damaged</div>
<div class="t" style="left:62.5px;top:1722.6px;font-size:26px;color:#1a1a1a;font-weight:normal;letter-spacing:1.383px;">Art</div>
<div class="t" style="left:2710.5px;top:276.1px;font-size:24.4px;color:#0a0a0a;font-weight:normal;letter-spacing:0.719px;-webkit-text-stroke:.8px #0a0a0a;">A</div>
<div class="t" style="left:2726.5px;top:264.5px;font-size:37.2px;color:#0a0a0a;font-weight:normal;letter-spacing:0.488px;-webkit-text-stroke:.9px #0a0a0a;">A</div>
<div class="t" style="left:36.0px;top:348.5px;font-size:24.2px;color:#000;font-weight:normal;letter-spacing:-0.647px;-webkit-text-stroke:.3px #000;">CONTENTS</div>
<div class="t" style="left:36.0px;top:408.5px;font-size:24.2px;color:#000;font-weight:normal;letter-spacing:-0.230px;-webkit-text-stroke:.3px #000;">DEFINITIONS</div>
<div class="t" style="left:36.0px;top:468.5px;font-size:24.2px;color:#000;font-weight:normal;letter-spacing:-0.497px;-webkit-text-stroke:.3px #000;">FOREWORD</div>
<div class="t" style="left:36.0px;top:528.5px;font-size:24.2px;color:#000;font-weight:normal;letter-spacing:0.463px;-webkit-text-stroke:.3px #000;">Introduction</div>
<div class="t" style="left:36.0px;top:588.5px;font-size:24.2px;color:#000;font-weight:normal;letter-spacing:-0.486px;-webkit-text-stroke:.3px #000;">Palaeography as a Tool in the Reading and Dating of the Dead Sea Scrolls</div>
<div class="t" style="left:36.0px;top:648.5px;font-size:24.2px;color:#000;font-weight:normal;letter-spacing:-0.074px;-webkit-text-stroke:.3px #000;">Toward the Birth of the “Jewish” Script</div>
<div class="t" style="left:36.0px;top:708.5px;font-size:24.2px;color:#000;font-weight:normal;letter-spacing:-0.310px;-webkit-text-stroke:.3px #000;">Prominent Characteristics of Certain Late Aramaic and Early “Jewish” Letters</div>
<div class="t" style="left:36.0px;top:768.5px;font-size:24.2px;color:#000;font-weight:normal;letter-spacing:-0.220px;-webkit-text-stroke:.3px #000;">Main Phases in the Evolution of the “Jewish” Script</div>
<div class="t" style="left:36.0px;top:828.5px;font-size:24.2px;color:#000;font-weight:normal;letter-spacing:-0.018px;-webkit-text-stroke:.3px #000;">Morphological Aspect of the Letters</div>
<div class="t" style="left:36.0px;top:888.5px;font-size:24.2px;color:#000;font-weight:normal;letter-spacing:-0.489px;-webkit-text-stroke:.3px #000;">Palaeography as a Tool for the Reading of Damaged Texts</div>
<div class="t" style="left:36.0px;top:948.5px;font-size:24.2px;color:#000;font-weight:normal;letter-spacing:-0.251px;-webkit-text-stroke:.3px #000;">Early Characteristics in Pre-“Jewish” Manuscripts from Qumran</div>
<div class="t" style="left:36.0px;top:1008.5px;font-size:24.2px;color:#000;font-weight:normal;letter-spacing:-0.198px;-webkit-text-stroke:.3px #000;">Select Bibliography</div>
<div class="t" style="left:963.0px;top:1323.7px;font-size:37px;color:#3a3a3a;font-weight:normal;letter-spacing:-0.851px;">Fig. 66a<i>. A detail of <span class="lk">4Q397</span> (photo: Israel Antiquities Authority).</i></div>
<div class="t" style="left:1049.5px;top:1431.0px;font-size:42.5px;color:#3d3d3d;font-weight:normal;letter-spacing:-0.668px;">Another example from the same column: the end of the second word in line 11 is damaged</div>
<div class="t" style="left:965.5px;top:1491.0px;font-size:42.5px;color:#3d3d3d;font-weight:normal;letter-spacing:-0.766px;">and only tops of the letters survive. The letter after the first He is a mere <span class="lk">down-stroke</span>. Given the</div>
<div class="t" style="left:965.5px;top:1551.0px;font-size:42.5px;color:#3d3d3d;font-weight:normal;letter-spacing:-0.709px;">fact that Waw and Yod have a “<span class="lk">hook</span>”, we identify it as Zayin. This is followed by Waw or Yod. Then</div>
<div class="t" style="left:965.5px;top:1610.8px;font-size:42.5px;color:#3d3d3d;font-weight:normal;letter-spacing:-0.662px;">follow remains from the top of a <span class="pg">[p. 37]</span> letter that bends backwards. This could again be Zayin but</div>
<div class="t" style="left:965.5px;top:1670.6px;font-size:42.5px;color:#3d3d3d;font-weight:normal;letter-spacing:-0.810px;clip-path:inset(0 0 9.1px 0);">also Nun, <i>both having their tops bending backwards</i> (already indicating the early phases of the</div>
</div>
</body></html>
